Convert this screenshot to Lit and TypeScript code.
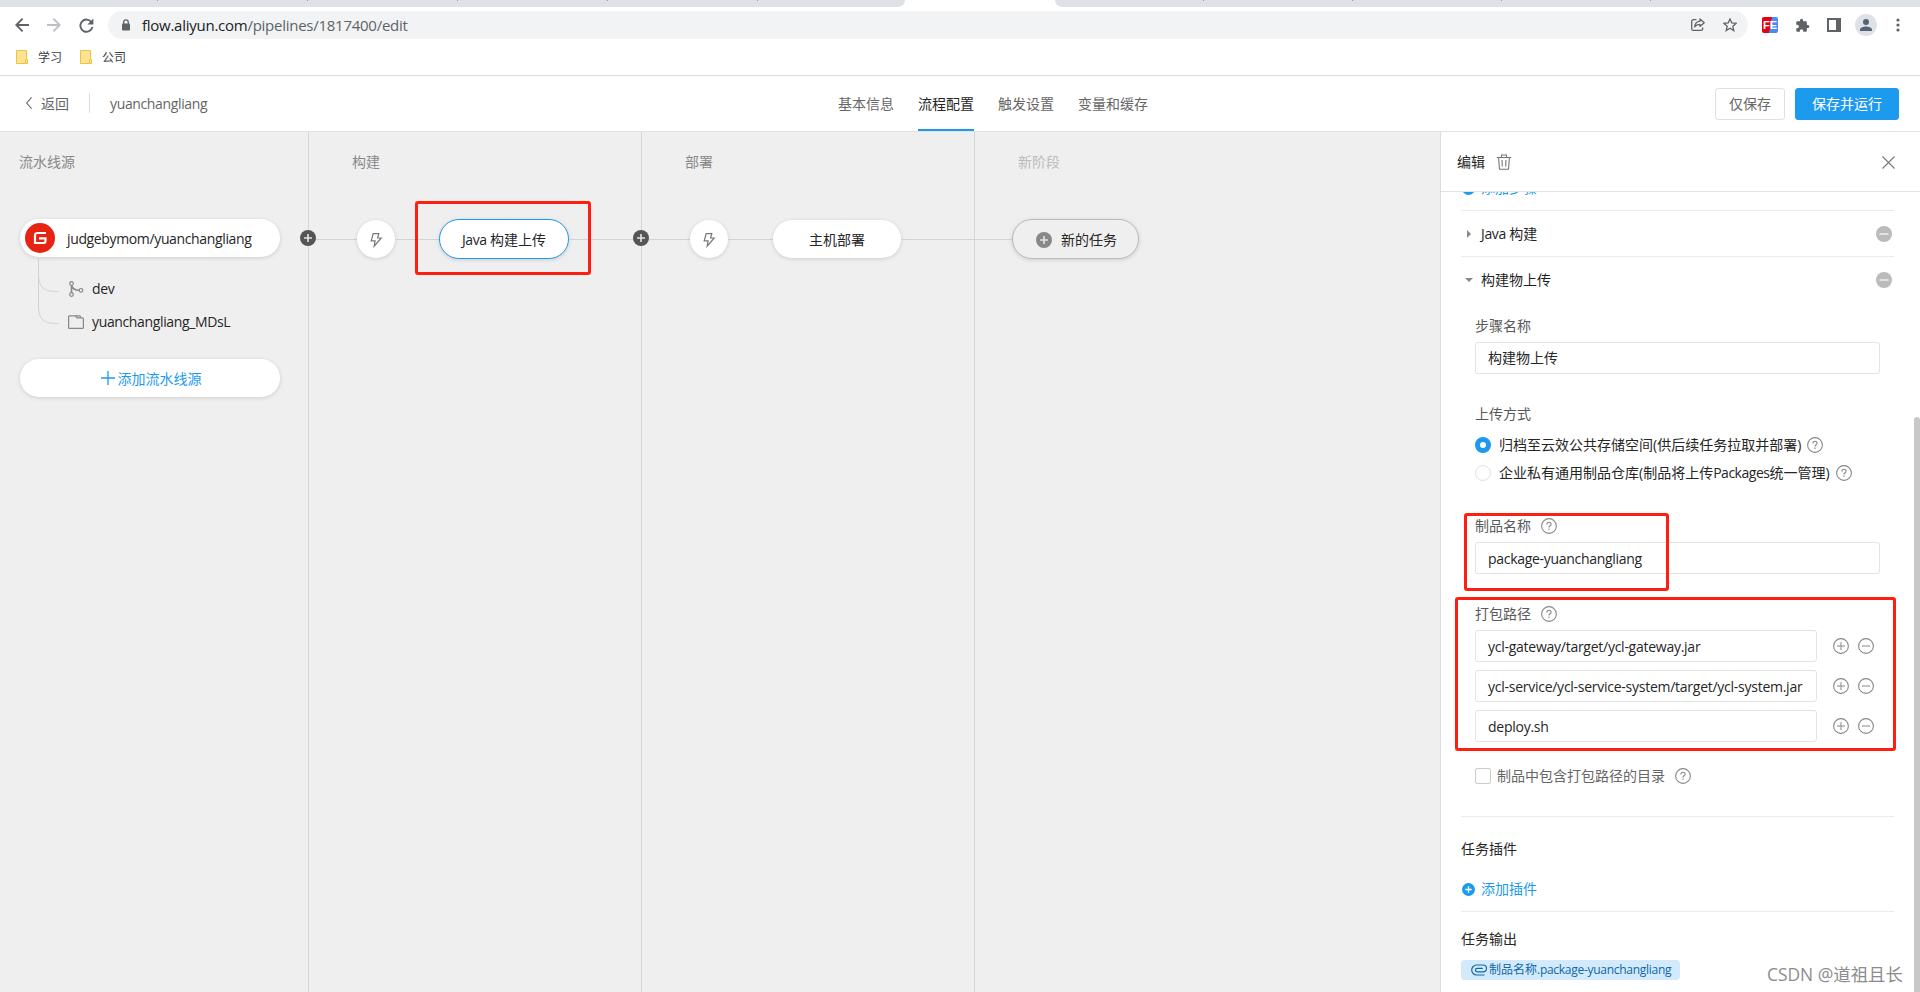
import { LitElement, html, css, svg } from "lit";
import { customElement } from "lit/decorators.js";

const plusDot = (bg: string, size = 16, fg = "#e4e4e4") => html`<svg width=${size} height=${size} viewBox="0 0 16 16">
  <circle cx="8" cy="8" r="8" fill=${bg} /><path d="M8 4v8M4 8h8" stroke=${fg} stroke-width="1.6" fill="none" /></svg>`;
const minusDot = html`<svg width="16" height="16" viewBox="0 0 16 16"><circle cx="8" cy="8" r="8" fill="#bbb" /><path d="M3.5 8h9" stroke="#eee" stroke-width="1.6" /></svg>`;
const help = html`<svg class="help" width="16" height="16" viewBox="0 0 16 16" fill="none" stroke="#888" stroke-width="1.1">
  <circle cx="8" cy="8" r="7.4" /><path d="M5.9 6.4c0-1.3.9-2.1 2.1-2.1s2.100.8 2.100 1.900c0 1.500-2.100 1.600-2.100 3.200" /><path d="M8 10.600v1.300" /></svg>`;
const ring = (plus: boolean) => html`<svg width="16" height="16" viewBox="0 0 16 16" fill="none" stroke="#888" stroke-width="1.1">
  <circle cx="8" cy="8" r="7.4" /><path d="M4 8h8" stroke="#999" stroke-width="1.2" />${plus ? svg`<path d="M8 4v8" stroke="#999" stroke-width="1.2" />` : ""}</svg>`;
const bolt = html`<svg width="14" height="16" viewBox="0 0 14 16" fill="none" stroke="#777" stroke-width="1.2"><path d="M4.2 1.6h5.6L8.6 6h3.6L5.2 14.2l.9-5.3H2.2z" /></svg>`;

@customElement("app-root")
export class AppRoot extends LitElement {
  static styles = css`
    :host { display: flex; flex-direction: column; position: relative; width: 1920px; height: 992px; overflow: hidden; background: #fff;
      font: 14px/20px "Open Sans", "Noto Sans CJK SC", sans-serif; color: #262626; }
    * { box-sizing: border-box; }
    svg { display: block; flex: none; }
    .la { letter-spacing: -0.36px; }
    .strip { display: flex; height: 7px; background: #fff; flex: none; }
    .strip-a, .strip-b { background: #dee1e6; height: 7px; display: flex; }
    .strip-a { width: 905px; border-bottom-right-radius: 7px; padding-left: 8px; }
    .strip-b { flex: 1; margin-left: 150px; border-bottom-left-radius: 7px; }
    .tick { width: 150px; height: 1px; border-right: 1px solid #9aa0a6; }
    .strip-b .tick { width: 149px; }
    .toolbar { display: flex; height: 36px; padding: 4px 15px; align-items: center; flex: none; }
    .nav { display: flex; gap: 18px; width: 93px; flex: none; }
    .addr { display: flex; align-items: center; width: 1640px; height: 28px; border-radius: 14px; background: #f1f3f4; padding: 0 11px 0 13px; flex: none; }
    .url { margin-left: 11px; font-size: 15px; line-height: 24px; color: #5f6368; letter-spacing: -0.26px; flex: 1; }
    .url b { font-weight: 400; color: #202124; }
    .addr-icons { display: flex; gap: 18px; }
    .ext { display: flex; align-items: center; width: 143px; margin-left: 14px; flex: none; }
    .ext svg:nth-child(2) { margin-left: 17px; }
    .ext svg:nth-child(3) { margin-left: 17px; }
    .ext svg:nth-child(4) { margin-left: 14px; }
    .ext svg:nth-child(5) { margin-left: 19px; }
    .fe { width: 16px; height: 16px; border-radius: 2px; background: linear-gradient(100deg, #e60012 52%, #4a8af4 53%); color: #fff; font: 700 11px/16px "Liberation Sans", sans-serif; text-align: center; flex: none; }
    .marks { display: flex; align-items: center; height: 33px; padding: 0 0 5px 16px; border-bottom: 1px solid #dadce0; flex: none; font-size: 12px; color: #3c4043; }
    .mark { display: flex; align-items: center; gap: 10px; width: 64px; }
    .mark span { padding-top: 2px; }
    .head { display: flex; height: 56px; border-bottom: 1px solid #e3e3e3; align-items: center; padding-right: 21px; flex: none; color: #666; }
    .back { display: flex; align-items: center; gap: 9px; padding-left: 26px; width: 90px; height: 20px; border-right: 1px solid #ddd; margin-bottom: 1px; }
    .back span { padding-top: 2px; }
    .title { width: 748px; padding-left: 20px; padding-top: 1px; }
    .tabs { display: flex; gap: 24px; flex: 1; height: 55px; }
    .tab { line-height: 55px; height: 55px; }
    .tab.on { color: #262626; border-bottom: 2px solid #1b9aee; }
    .btn { height: 32px; border: 1px solid #e0e0e0; border-radius: 3px; width: 70px; text-align: center; line-height: 29px; }
    .btn.go { width: 104px; margin-left: 10px; border-color: #1b9aee; background: #1b9aee; color: #fff; }
    .main { display: flex; flex: 1; min-height: 0; }
    .canvas { display: flex; width: 1441px; flex: none; background: #efefef; }
    .col { border-right: 1px solid #d5d5d5; width: 333px; flex: none; }
    .col:first-child { width: 309px; padding-left: 19px; }
    .col:last-child { border: 0; width: 466px; }
    .col h4 { margin: 20px 0 47px; font-weight: 400; font-size: 14px; line-height: 20px; color: #888; padding-left: 43px; }
    .col:first-child h4 { padding-left: 0; }
    .col:last-child h4 { color: #bbb; }
    .card { display: flex; align-items: center; width: 260px; height: 38px; margin-left: 1px; border-radius: 19px; background: #fff; box-shadow: 0 1px 4px rgba(0,0,0,.14); }
    .src { padding-left: 5px; gap: 12px; }
    .src span { padding-top: 2px; }
    .tree { display: flex; margin: 1px 0 0 19px; height: 101px; }
    .leaves { display: flex; flex-direction: column; margin-left: 9px; padding-top: 21px; gap: 13px; }
    .leaf { display: flex; gap: 8px; align-items: center; height: 20px; }
    .add { justify-content: center; color: #1b9aee; gap: 3px; padding-left: 2px; }
    .add span { padding-top: 1px; }
    .flow { display: flex; align-items: center; height: 40px; }
    .ln { height: 1px; background: #d3d3d3; }
    .l1 { width: 41px; } .l2 { width: 44px; } .l3 { width: 45px; } .l4 { width: 37px; } .grow { flex: 1; }
    .knob { margin-left: -9px; margin-top: -2px; position: relative; flex: none; }
    .round { width: 38px; height: 38px; border-radius: 50%; background: #fff; display: flex; align-items: center; justify-content: center; box-shadow: 0 1px 4px rgba(0,0,0,.14); padding-top: 2px; }
    .pill { width: 128px; height: 38px; border-radius: 20px; background: #fff; text-align: center; line-height: 39px; box-shadow: 0 1px 4px rgba(0,0,0,.14); flex: none; }
    .pill.sel { width: 130px; height: 40px; border: 1px solid #1b9aee; }
    .pill.new { width: 127px; height: 40px; border: 1px solid #bbb; background: #efefef; display: flex; align-items: center; padding: 2px 0 0 23px; gap: 9px; line-height: 20px; }
    .panel { width: 479px; border-left: 1px solid #dcdcdc; background: #fff; display: flex; flex-direction: column; flex: none; margin-left: -1px; width: 480px; }
    .phead { display: flex; height: 60px; border-bottom: 1px solid #e3e3e3; align-items: center; padding: 0 25px 0 16px; flex: none; }
    .phead svg:last-child { margin: 2px 0 0 auto; }
    .phead svg:nth-child(2) { margin-left: 11px; }
    .scroll { display: flex; flex: 1; min-height: 0; overflow: hidden; }
    .body { width: 453px; padding-left: 20px; flex: none; }
    .bar { width: 6px; height: 575px; margin: 225px 0 0 20px; background: #c8c8c8; border-radius: 3px 3px 0 0; flex: none; }
    .cut { height: 19px; border-bottom: 1px solid #ebebeb; overflow: hidden; display: flex; align-items: flex-end; }
    .link { display: flex; align-items: center; color: #1b9aee; gap: 6px; padding-left: 1px; height: 20px; }
    .cut .link { margin-bottom: 12px; }
    .step { display: flex; align-items: center; height: 46px; border-bottom: 1px solid #ebebeb; padding: 0 2px 0 3px; color: #1f1f1f; }
    .step svg:last-child { margin-left: auto; }
    .step > span { margin-left: 7px; }
    .step.open { border: 0; }
    .form { padding-left: 14px; height: 514px; border-bottom: 1px solid #ebebeb; display: flex; flex-direction: column; }
    .lab { display: flex; align-items: center; gap: 10px; height: 20px; color: #595959; margin: 13px 0 6px; flex: none; }
    .inp { width: 405px; height: 32px; border: 1px solid #e3e3e3; border-radius: 3px; padding: 1px 12px 0; line-height: 30px; flex: none; }
    .inp.cn { padding-top: 0; line-height: 29px; }
    .lab.gap { margin-top: 30px; }
    .radios { padding-top: 1px; margin-bottom: -1px; }
    .radio { display: flex; align-items: center; height: 28px; white-space: nowrap; }
    .radio > span { margin: 0 6px 0 8px; }
    .pk { letter-spacing: -0.48px; }
    .dot { width: 16px; height: 16px; border-radius: 50%; border: 1px solid #e0e0e0; }
    .dot.on { border: 5px solid #1b9aee; }
    .path { display: flex; align-items: center; gap: 9px; margin-bottom: 8px; }
    .path .inp { width: 342px; margin-right: 7px; letter-spacing: -0.26px; }
    .name { letter-spacing: -0.3px; }
    .chk { display: flex; align-items: center; gap: 6px; margin-top: 16px; color: #666; }
    .box { width: 16px; height: 16px; border: 1px solid #ccc; border-radius: 2px; }
    .chk .help { margin-left: 4px; }
    .sec { margin: 22px 0 20px; height: 20px; }
    .after { height: 33px; border-bottom: 1px solid #ebebeb; display: flex; }
    .sec.out { margin: 17px 0 11px; }
    .tag { display: flex; align-items: center; width: 219px; height: 20px; border-radius: 4px; background: #d2eafb; color: #0f68a8; font-size: 12px; padding-left: 10px; gap: 2px; white-space: nowrap; }
    .tag .tl { letter-spacing: -0.28px; }
    .mk { position: absolute; border: 3px solid #ff1f11; border-radius: 3px; }
    .m1 { left: 415px; top: 201px; width: 176px; height: 74px; }
    .m2 { left: 1464px; top: 513px; width: 205px; height: 78px; }
    .m3 { left: 1455px; top: 597px; width: 441px; height: 154px; }
    .wm { position: absolute; left: 1767px; top: 961px; font-size: 17.4px; line-height: 26px; color: #8c8c8c; white-space: nowrap; }
  `;

  render() {
    const folder = html`<svg width="12" height="14" viewBox="0 0 12 14"><path d="M.5.5h10v9h1v4H.5z" fill="#ffe48f" stroke="#e8c547" /><path d="M9.5 13v-3.5" stroke="#e8c547" /></svg>`;
    const caret = (open: boolean) => html`<svg width="10" height="10" viewBox="0 0 10 10"><path d=${open ? "M1 3h8L5 7z" : "M3 1v8l4-4z"} fill="#888" /></svg>`;
    return html`
      <div class="strip"><div class="strip-a">${[1, 2, 3, 4, 5].map(() => html`<i class="tick"></i>`)}</div>
        <div class="strip-b">${[1, 2, 3, 4].map(() => html`<i class="tick"></i>`)}</div></div>
      <div class="toolbar">
        <div class="nav">
          <svg width="14" height="14" viewBox="0 0 14 14" fill="none" stroke="#5f6368" stroke-width="1.9"><path d="M14 7H1.5M7.6.7L1.3 7l6.3 6.3" /></svg>
          <svg width="14" height="14" viewBox="0 0 14 14" fill="none" stroke="#bdc1c6" stroke-width="1.9"><path d="M0 7h12.5M6.4.7L12.7 7l-6.3 6.3" /></svg>
          <svg width="15" height="15" viewBox="0 0 15 15"><path d="M12.6 4.4A6.1 6.1 0 1 0 13.4 9" fill="none" stroke="#5f6368" stroke-width="1.9" /><path d="M14.4.6v6H8.4z" fill="#5f6368" /></svg>
        </div>
        <div class="addr">
          <svg width="10" height="12" viewBox="0 0 10 12"><rect x="1" y="4.5" width="8" height="7" rx="1" fill="#5f6368" /><path d="M2.7 5V3.2a2.3 2.3 0 0 1 4.6 0V5" fill="none" stroke="#5f6368" stroke-width="1.3" /></svg>
          <span class="url"><b>flow.aliyun.com</b>/pipelines/1817400/edit</span>
          <div class="addr-icons">
            <svg width="14" height="14" viewBox="0 0 14 14" fill="none" stroke="#5f6368" stroke-width="1.3"><path d="M5.5 1.7H2.4C1.5 1.7.7 2.400.7 3.400v7.300c0 1 .8 1.700 1.700 1.700h7.600c1 0 1.700-.7 1.700-1.700V9.500" /><path d="M9 1l4.200 3.700L9 8.400V6.300C6.600 6.300 5 7 3.700 9c.2-3 2-5.400 5.300-5.800z" stroke-linejoin="round" /></svg>
            <svg width="14" height="14" viewBox="0 0 14 14" fill="none" stroke="#5f6368" stroke-width="1.3"><path d="M7 1l1.800 4 4.300.4-3.300 2.900 1 4.300L7 10.300l-3.800 2.300 1-4.300L.9 5.400 5.200 5z" /></svg>
          </div>
        </div>
        <div class="ext">
          <div class="fe">FE</div>
          <svg width="15" height="15" viewBox="0 0 24 24"><path d="M20.500 11H19V7c0-1.100-.9-2-2-2h-4V3.500a2.500 2.500 0 0 0-5 0V5H4c-1.100 0-2 .9-2 2v3.800h1.500a2.700 2.700 0 0 1 0 5.400H2V20c0 1.100.9 2 2 2h3.800v-1.500a2.700 2.700 0 0 1 5.400 0V22H17c1.100 0 2-.9 2-2v-4h1.500a2.500 2.500 0 0 0 0-5z" fill="#5f6368" /></svg>
          <svg width="14" height="14" viewBox="0 0 14 14"><path d="M0 0h14v14H0zM2 2v10h7V2z" fill="#5f6368" fill-rule="evenodd" /></svg>
          <svg width="22" height="22" viewBox="0 0 22 22"><circle cx="11" cy="11" r="11" fill="#dee1e6" /><circle cx="11" cy="8" r="3" fill="#56617a" /><path d="M5 17v-1.500c0-2 4-3 6-3s6 1 6 3V17z" fill="#56617a" /></svg>
          <svg width="4" height="14" viewBox="0 0 4 14" fill="#5f6368"><circle cx="2" cy="2" r="1.600" /><circle cx="2" cy="7" r="1.600" /><circle cx="2" cy="12" r="1.600" /></svg>
        </div>
      </div>
      <div class="marks"><div class="mark">${folder}<span>学习</span></div><div class="mark">${folder}<span>公司</span></div></div>
      <div class="head">
        <div class="back"><svg width="6" height="12" viewBox="0 0 6 12" fill="none" stroke="#666" stroke-width="1.100"><path d="M5.600.4L.7 6l4.900 5.600" /></svg><span>返回</span></div>
        <div class="title la">yuanchangliang</div>
        <div class="tabs"><div class="tab">基本信息</div><div class="tab on">流程配置</div><div class="tab">触发设置</div><div class="tab">变量和缓存</div></div>
        <div class="btn">仅保存</div><div class="btn go">保存并运行</div>
      </div>
      <div class="main">
        <div class="canvas">
          <div class="col"><h4>流水线源</h4>
            <div class="card src">
              <svg width="30" height="30" viewBox="0 0 30 30"><circle cx="15" cy="15" r="15" fill="#e72313" /><path d="M21 10h-8.500Q10 10 10 12.500V20h8.500q2 0 2-2v-2.600h-6.500" fill="none" stroke="#fff" stroke-width="2.200" /></svg>
              <span class="la">judgebymom/yuanchangliang</span></div>
            <div class="tree">
              <svg width="21" height="68" viewBox="0 0 21 68" fill="none" stroke="#d3d3d3"><path d="M.5 0v50Q.5 65.500 16 65.500h5M.5 18Q.5 33.500 16 33.500h5" /></svg>
              <div class="leaves">
                <div class="leaf"><svg width="16" height="16" viewBox="0 0 16 16" fill="none" stroke="#888" stroke-width="1.200"><circle cx="3.500" cy="2.500" r="1.800" /><circle cx="3.500" cy="13.500" r="1.800" /><circle cx="13" cy="9.300" r="1.800" /><path d="M3.500 4.300v7.400M3.500 4.300C4.500 8 7 9.300 11.200 9.300" stroke-width="1.600" /></svg><span class="la">dev</span></div>
                <div class="leaf"><svg width="16" height="14" viewBox="0 0 16 14" fill="none" stroke="#888" stroke-width="1.200"><path d="M7.500.8H1.600q-1 0-1 1v10.600q0 1 1 1h12.800q1 0 1-1V3.900q0-1-1-1H9z" /><path d="M7.500.8h4.300l1.200 2" /></svg><span class="la">yuanchangliang_MDsL</span></div>
              </div>
            </div>
            <div class="card add"><svg width="14" height="14" viewBox="0 0 14 14"><path d="M7 0v14M0 7h14" stroke="#1b9aee" stroke-width="1.300" /></svg><span>添加流水线源</span></div>
          </div>
          <div class="col"><h4>构建</h4><div class="flow"><div class="knob">${plusDot("#555")}</div><i class="ln l1"></i><div class="round">${bolt}</div><i class="ln l2"></i><div class="pill sel"><span class="la">Java </span>构建上传</div><i class="ln grow"></i></div></div>
          <div class="col"><h4>部署</h4><div class="flow"><div class="knob">${plusDot("#555")}</div><i class="ln l1"></i><div class="round">${bolt}</div><i class="ln l3"></i><div class="pill">主机部署</div><i class="ln grow"></i></div></div>
          <div class="col"><h4>新阶段</h4><div class="flow"><i class="ln l4"></i><div class="pill new">${plusDot("#888")}新的任务</div></div></div>
        </div>
        <div class="panel">
          <div class="phead"><span>编辑</span>
            <svg width="16" height="16" viewBox="0 0 16 16" fill="none" stroke="#777" stroke-width="1.100"><path d="M.8 3.500h14.400M5.500 3.300V1h5v2.300M2.600 3.500l.9 11.700h9l.9-11.700M6 6l.3 6.500M10 6l-.3 6.500" /></svg>
            <svg width="13" height="13" viewBox="0 0 13 13" stroke="#777" stroke-width="1.100"><path d="M.5.5l12 12M12.500.5l-12 12" /></svg></div>
          <div class="scroll"><div class="body">
            <div class="cut"><div class="link">${plusDot("#1b9aee", 13, "#fff")}添加步骤</div></div>
            <div class="step">${caret(false)}<span><span class="la">Java </span>构建</span>${minusDot}</div>
            <div class="step open">${caret(true)}<span>构建物上传</span>${minusDot}</div>
            <div class="form">
              <div class="lab">步骤名称</div><div class="inp cn">构建物上传</div>
              <div class="lab gap">上传方式</div>
              <div class="radios">
                <div class="radio"><i class="dot on"></i><span>归档至云效公共存储空间(供后续任务拉取并部署)</span>${help}</div>
                <div class="radio"><i class="dot"></i><span>企业私有通用制品仓库(制品将上传<span class="pk">Packages</span>统一管理)</span>${help}</div>
              </div>
              <div class="lab gap">制品名称${help}</div><div class="inp name">package-yuanchangliang</div>
              <div class="lab gap">打包路径${help}</div>
              ${["ycl-gateway/target/ycl-gateway.jar", "ycl-service/ycl-service-system/target/ycl-system.jar", "deploy.sh"].map((p) => html`<div class="path"><div class="inp">${p}</div>${ring(true)}${ring(false)}</div>`)}
              <div class="chk"><i class="box"></i>制品中包含打包路径的目录${help}</div>
            </div>
            <div class="sec">任务插件</div>
            <div class="after"><div class="link">${plusDot("#1b9aee", 13, "#fff")}添加插件</div></div>
            <div class="sec out">任务输出</div>
            <div class="tag"><svg width="16" height="12" viewBox="0 0 16 12" fill="none" stroke="#0f68a8" stroke-width="1.200"><path d="M13.500 11H5.700a5 5 0 0 1 0-10h6.400a3.400 3.400 0 0 1 0 6.800H6.200a1.700 1.700 0 0 1 0-3.500h5.600" /></svg><span>制品名称<span class="tl">.package-yuanchangliang</span></span></div>
          </div><div class="bar"></div></div>
        </div>
      </div>
      <div class="mk m1"></div><div class="mk m2"></div><div class="mk m3"></div>
      <div class="wm">CSDN @道祖且长</div>`;
  }
}
